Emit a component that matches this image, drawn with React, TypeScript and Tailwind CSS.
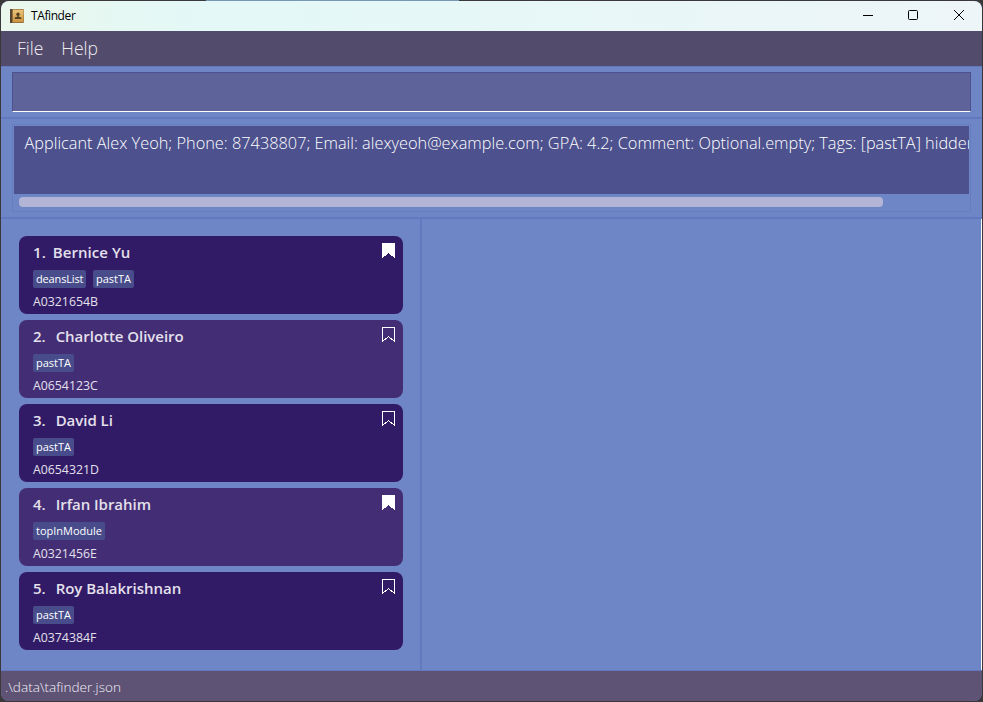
import React from 'react';

type Applicant = { name: string; tags: string[]; id: string; marked: boolean };

const applicants: Applicant[] = [
  { name: 'Bernice Yu', tags: ['deansList', 'pastTA'], id: 'A0321654B', marked: true },
  { name: 'Charlotte Oliveiro', tags: ['pastTA'], id: 'A0654123C', marked: false },
  { name: 'David Li', tags: ['pastTA'], id: 'A0654321D', marked: false },
  { name: 'Irfan Ibrahim', tags: ['topInModule'], id: 'A0321456E', marked: true },
  { name: 'Roy Balakrishnan', tags: ['pastTA'], id: 'A0374384F', marked: false },
];

function AddressBookIcon() {
  return (
    <svg width="14" height="14" viewBox="0 0 14 14" className="mb-px shrink-0">
      <defs>
        <linearGradient id="cover" x1="0" y1="0" x2="0" y2="1">
          <stop offset="0" stopColor="#e9c47c" />
          <stop offset="1" stopColor="#cf9540" />
        </linearGradient>
      </defs>
      <rect width="14" height="14" rx="1" fill="#94703c" />
      <rect x="3" y="0.7" width="10.5" height="12.3" fill="url(#cover)" />
      <rect width="2" height="14" fill="#58452f" />
      <circle cx="8" cy="5.2" r="1.7" fill="#544022" />
      <path d="M7.300 6h1.400v1.800l2.600 .8v1.400H4.700V8.600l2.600-.8z" fill="#544022" />
    </svg>
  );
}

function Bookmark({ filled }: { filled: boolean }) {
  return (
    <svg width="13" height="15" viewBox="0 0 13 15" className="mt-[7px] mr-2 shrink-0" shapeRendering="crispEdges">
      <path d="M.5 .5h12v14l-6-5-6 5z" fill={filled ? '#fff' : 'none'} stroke="#fff" />
    </svg>
  );
}

function Card({ applicant, index }: { applicant: Applicant; index: number }) {
  return (
    <li className={`flex h-[78px] justify-between rounded-lg text-[#e4e0ec] ${index % 2 ? 'bg-[#432d75]' : 'bg-[#311b66]'}`}>
      <div className="pl-[14px]">
        <div className={`mt-[5px] flex h-[22px] text-[15px] leading-[22px] font-semibold whitespace-nowrap ${index === 0 ? 'gap-[7px] tracking-[0.05px]' : 'gap-[10px] tracking-[-0.03px]'}`}>
          <span>{index + 1}.</span>
          <span>{applicant.name}</span>
        </div>
        <div className="mt-[7px] flex gap-[7px]">
          {applicant.tags.map((tag) => (
            <span
              key={tag}
              className={`h-[18px] rounded-[2px] bg-[#484c8b] px-[3px] text-[11px] leading-[18px] font-medium text-white ${tag === 'deansList' ? 'w-[53px] tracking-[-0.16px]' : ''}`}
            >
              {tag}
            </span>
          ))}
        </div>
        <div className="mt-[5px] text-[12.300px] leading-[18px]">{applicant.id}</div>
      </div>
      <Bookmark filled={applicant.marked} />
    </li>
  );
}

export default function App() {
  return (
    <div className="flex h-[702px] w-[983px] flex-col overflow-hidden bg-[#3b383b] px-px pb-px font-['Open_Sans','Noto_Sans',sans-serif]">
      <div className="flex h-px shrink-0 pl-[205px]">
        <div className="w-[253px] bg-[#7898b9]" />
      </div>
      <div className="flex min-h-0 flex-1 flex-col overflow-hidden rounded-lg bg-[#6f86c6]">
        <header className="flex h-[30px] shrink-0 items-center bg-linear-to-r from-[#eaf7ec] via-[#e3f8f7] via-20% to-[#edf5f8] pl-[9px] text-black">
          <AddressBookIcon />
          <span className="ml-[7px] text-[12px] leading-[18px] tracking-[-0.4px]">TAfinder</span>
          <svg width="104" height="12" viewBox="0 0 104 12" className="mr-4 mb-[2px] ml-auto" fill="none" stroke="#000">
            <path d="M1 6.500h10" />
            <rect x="46.500" y="1.500" width="9" height="9" rx="1" />
            <path d="M92 1l10 10M102 1L92 11" />
          </svg>
        </header>
        <nav className="flex h-[35px] shrink-0 gap-[18px] bg-[#534b6c] pl-[16px] text-[17.500px] leading-[35px] font-light text-[#efedf2]">
          <span>File</span>
          <span>Help</span>
        </nav>
        <section className="h-[53px] shrink-0 border-t border-b-2 border-[#6179be] px-[11px] pt-[5px]">
          <div className="h-10 border border-[#4d5190] border-b-white bg-[#5e6399]" />
        </section>
        <section className="h-[100px] shrink-0 border-b-2 border-[#6179be] px-[11px] pt-[5px]">
          <div className="h-[88px] overflow-hidden border border-[#667dc0] p-px">
            <div className="h-[68px] overflow-hidden bg-[#4d518e] pt-[5px] pl-[10.500px] text-[16.320px] leading-6 font-light whitespace-nowrap text-white">
              Applicant Alex Yeoh; Phone: 87438807; Email: alexyeoh@example.com; GPA: 4.2; Comment: Optional.empty; Tags: [pastTA] hidden
            </div>
            <div className="mt-[3px] ml-[5px] h-[10px] w-[864px] rounded-[4px] bg-[#b2b5d5]" />
          </div>
        </section>
        <main className="flex min-h-0 flex-1 border-b border-[#6179be]">
          <ul className="flex w-[421px] shrink-0 flex-col gap-[6px] border-r-2 border-[#6179be] pt-[17px] pr-[17px] pl-[18px]">
            {applicants.map((a, i) => (
              <Card key={a.id} applicant={a} index={i} />
            ))}
          </ul>
          <div className="flex-1 border-r border-white" />
        </main>
        <footer className="h-[30px] shrink-0 bg-[#5e5375] pl-1 text-[13.600px] leading-[32px] font-light text-[#f2f0f5]">
          .\data\tafinder.json
        </footer>
      </div>
    </div>
  );
}
